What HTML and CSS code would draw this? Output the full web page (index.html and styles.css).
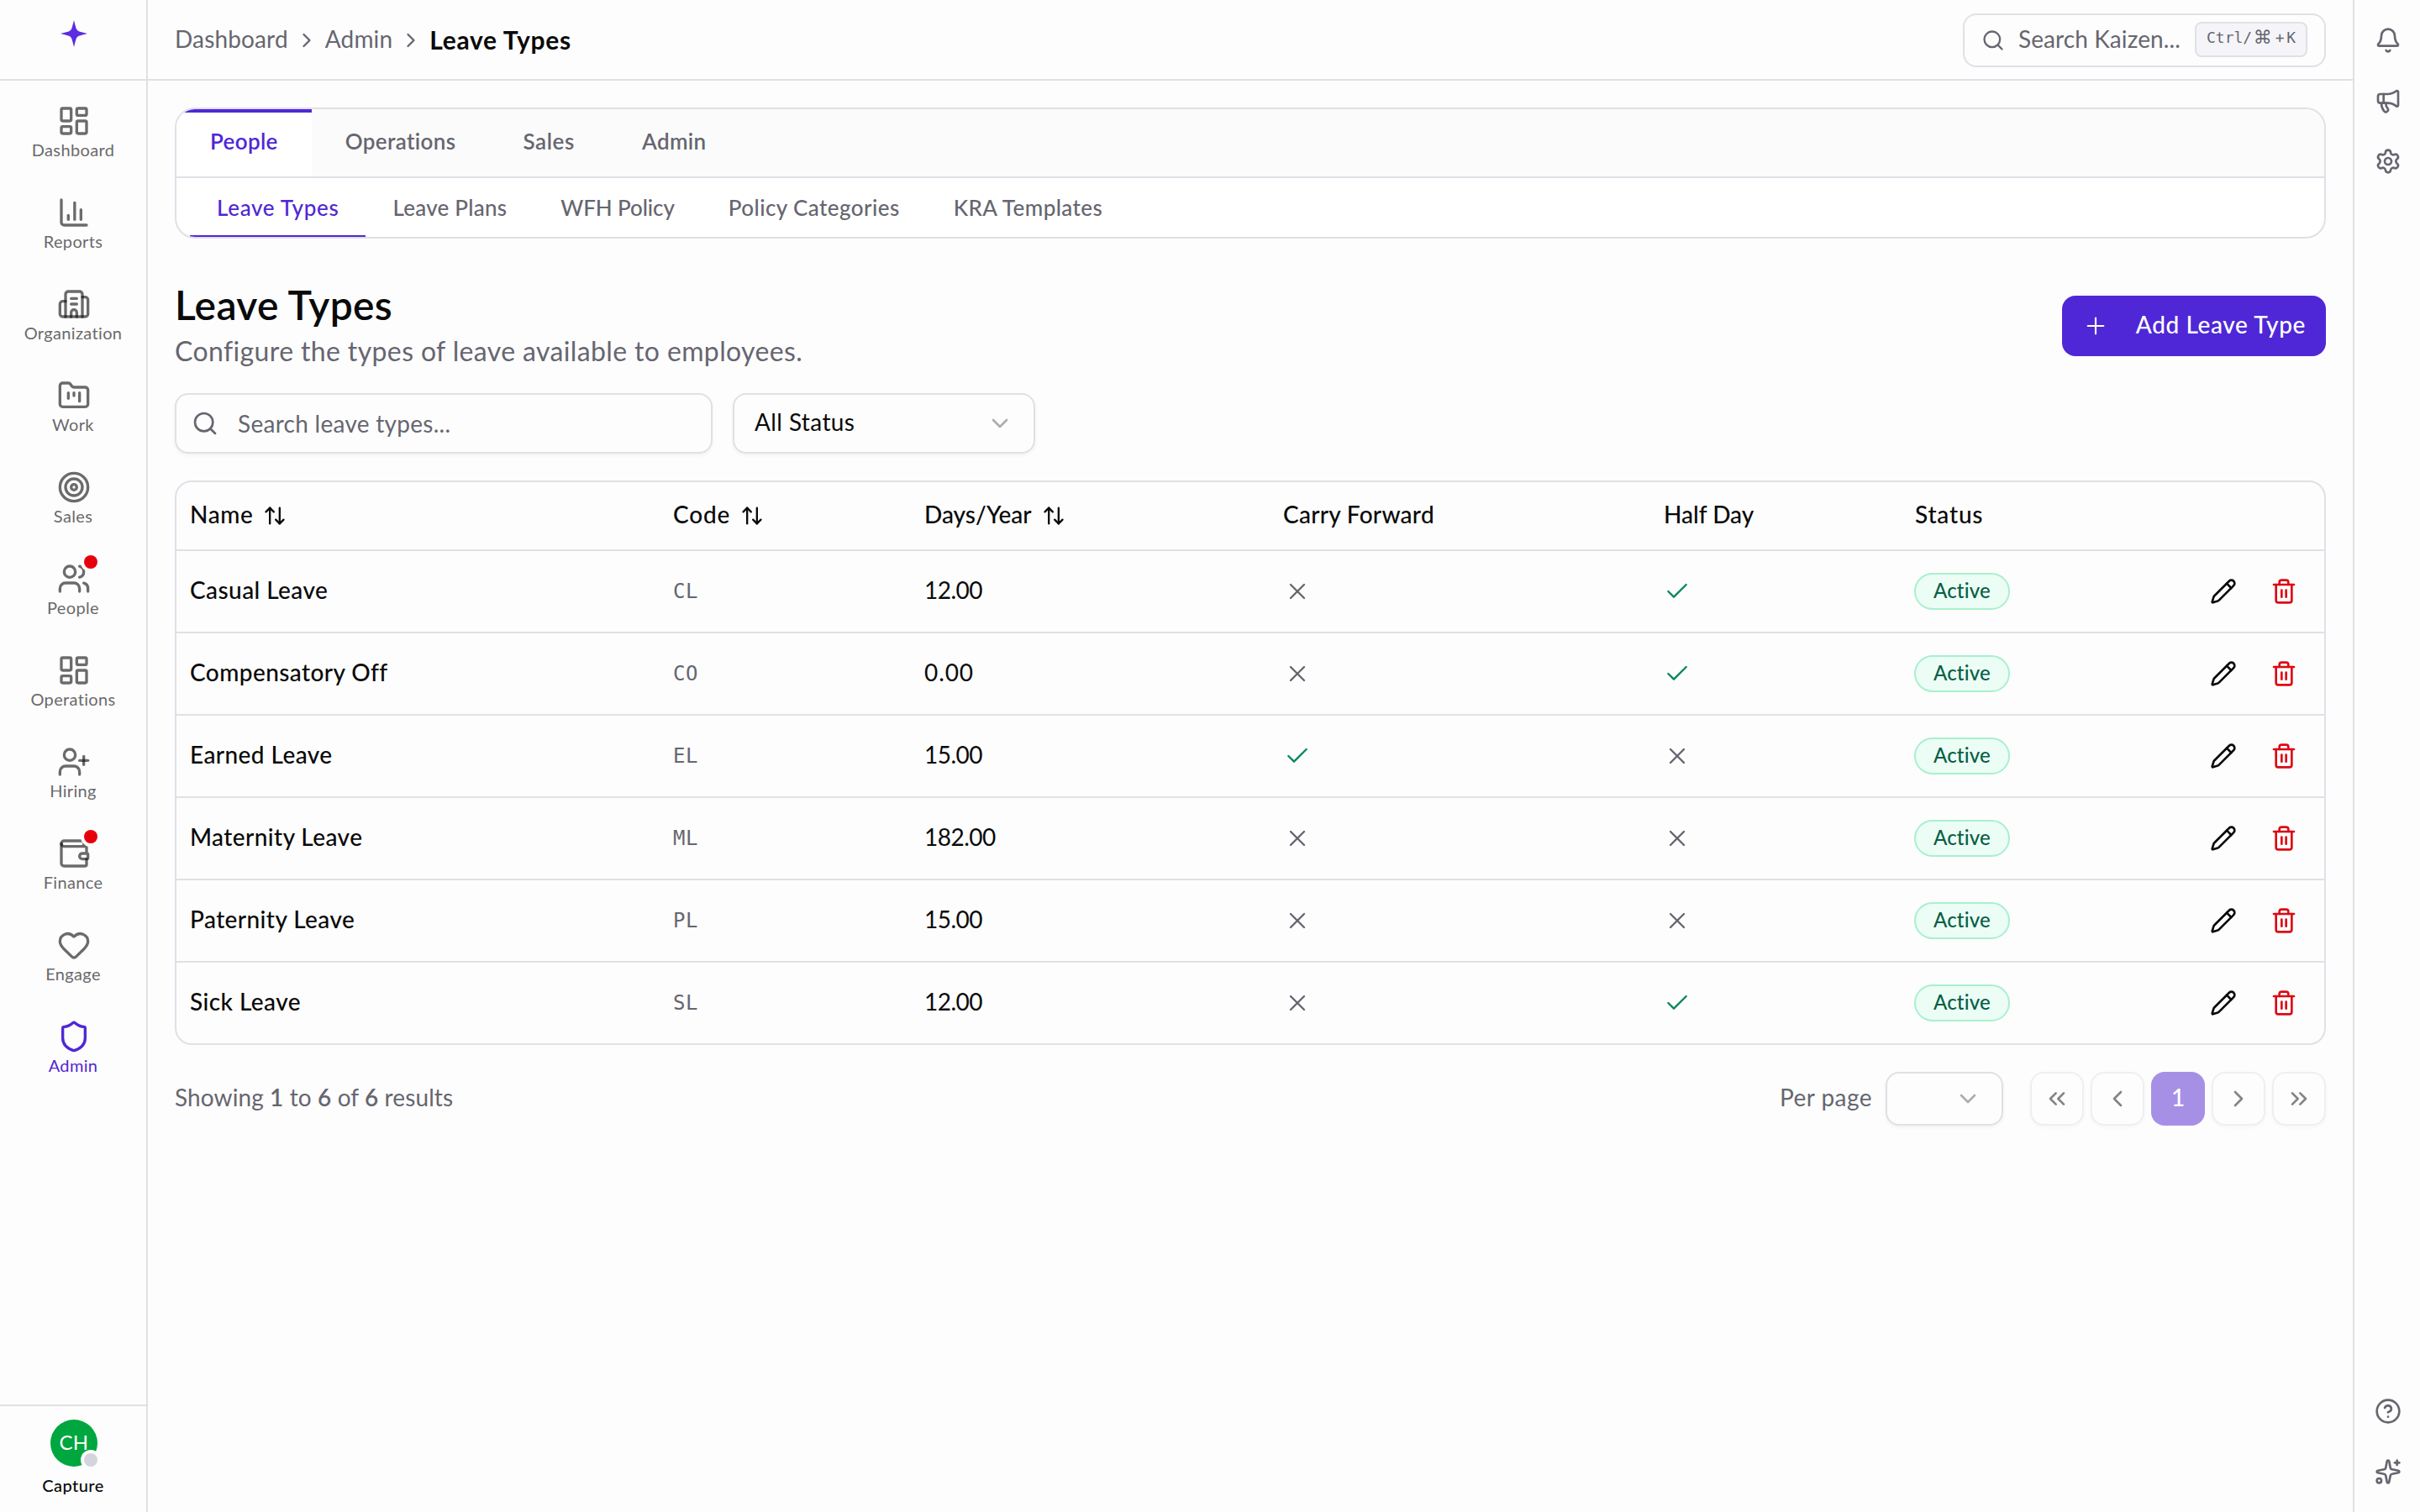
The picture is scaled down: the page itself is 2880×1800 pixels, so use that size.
FILE: index.html
```html
<!DOCTYPE html>
<html lang="en">
<head>
<meta charset="utf-8">
<title>Leave Types</title>
<link rel="stylesheet" href="styles.css">
</head>
<body>
<svg class="sprite" aria-hidden="true">
  <symbol id="grid" viewBox="0 0 24 24"><rect width="7" height="9" x="3" y="3" rx="1"/><rect width="7" height="5" x="14" y="3" rx="1"/><rect width="7" height="9" x="14" y="12" rx="1"/><rect width="7" height="5" x="3" y="16" rx="1"/></symbol>
  <symbol id="chart" viewBox="0 0 24 24"><path d="M3 3v16a2 2 0 0 0 2 2h16"/><path d="M17 17V10"/><path d="M12.500 17V5"/><path d="M8 17v-3"/></symbol>
  <symbol id="building" viewBox="0 0 24 24"><path d="M10 12h4"/><path d="M10 8h4"/><path d="M14 21v-3a2 2 0 0 0-4 0v3"/><path d="M6 10H4a2 2 0 0 0-2 2v7a2 2 0 0 0 2 2h16a2 2 0 0 0 2-2V9a2 2 0 0 0-2-2h-2"/><path d="M6 21V5a2 2 0 0 1 2-2h8a2 2 0 0 1 2 2v16"/></symbol>
  <symbol id="folder" viewBox="0 0 24 24"><path d="M4 20h16a2 2 0 0 0 2-2V8a2 2 0 0 0-2-2h-7.930a2 2 0 0 1-1.660-.900l-.820-1.200A2 2 0 0 0 7.930 3H4a2 2 0 0 0-2 2v13c0 1.100.900 2 2 2Z"/><path d="M8 10v4"/><path d="M12 10v2"/><path d="M16 10v6"/></symbol>
  <symbol id="target" viewBox="0 0 24 24"><circle cx="12" cy="12" r="10"/><circle cx="12" cy="12" r="6"/><circle cx="12" cy="12" r="2"/></symbol>
  <symbol id="users" viewBox="0 0 24 24"><path d="M16 21v-2a4 4 0 0 0-4-4H6a4 4 0 0 0-4 4v2"/><path d="M16 3.128a4 4 0 0 1 0 7.744"/><path d="M22 21v-2a4 4 0 0 0-3-3.870"/><circle cx="9" cy="7" r="4"/></symbol>
  <symbol id="user-plus" viewBox="0 0 24 24"><path d="M16 21v-2a4 4 0 0 0-4-4H6a4 4 0 0 0-4 4v2"/><circle cx="9" cy="7" r="4"/><path d="M19 8v6"/><path d="M22 11h-6"/></symbol>
  <symbol id="wallet" viewBox="0 0 24 24"><path d="M19 7V4a1 1 0 0 0-1-1H5a2 2 0 0 0 0 4h15a1 1 0 0 1 1 1v4h-3a2 2 0 0 0 0 4h3a1 1 0 0 0 1-1v-2a1 1 0 0 0-1-1"/><path d="M3 5v14a2 2 0 0 0 2 2h15a1 1 0 0 0 1-1v-4"/></symbol>
  <symbol id="heart" viewBox="0 0 24 24"><path d="M2 9.500a5.500 5.500 0 0 1 9.591-3.676.560.560 0 0 0 .818 0A5.490 5.490 0 0 1 22 9.500c0 2.290-1.500 4-3 5.500l-5.492 5.313a2 2 0 0 1-3 .019L5 15c-1.500-1.500-3-3.200-3-5.500"/></symbol>
  <symbol id="shield" viewBox="0 0 24 24"><path d="M20 13c0 5-3.500 7.500-7.660 8.950a1 1 0 0 1-.670-.010C7.500 20.500 4 18 4 13V6a1 1 0 0 1 1-1c2 0 4.500-1.200 6.240-2.720a1.170 1.170 0 0 1 1.520 0C14.510 3.810 17 5 19 5a1 1 0 0 1 1 1z"/></symbol>
  <symbol id="star" viewBox="0 0 32 32"><path d="M16 0C17 4 18 8 18.800 10.200Q19.600 12.400 21.800 13.200C24 14 28 15 32 16C28 17 24 18 21.800 18.800Q19.600 19.600 18.800 21.800C18 24 17 28 16 32C15 28 14 24 13.200 21.800Q12.400 19.600 10.200 18.800C8 18 4 17 0 16C4 15 8 14 10.200 13.200Q12.400 12.400 13.200 10.200C14 8 15 4 16 0Z"/></symbol>
  <symbol id="search" viewBox="0 0 24 24"><path d="m21 21-4.340-4.340"/><circle cx="11" cy="11" r="8"/></symbol>
  <symbol id="right" viewBox="0 0 24 24"><path d="m9 18 6-6-6-6"/></symbol>
  <symbol id="left" viewBox="0 0 24 24"><path d="m15 18-6-6 6-6"/></symbol>
  <symbol id="down" viewBox="0 0 24 24"><path d="m6 9 6 6 6-6"/></symbol>
  <symbol id="first" viewBox="0 0 24 24"><path d="m11 17-5-5 5-5"/><path d="m18 17-5-5 5-5"/></symbol>
  <symbol id="last" viewBox="0 0 24 24"><path d="m6 17 5-5-5-5"/><path d="m13 17 5-5-5-5"/></symbol>
  <symbol id="sort" viewBox="0 0 24 24"><path d="m21 16-4 4-4-4"/><path d="M17 20V4"/><path d="m3 8 4-4 4 4"/><path d="M7 4v16"/></symbol>
  <symbol id="x" viewBox="0 0 24 24"><path d="M18 6 6 18"/><path d="m6 6 12 12"/></symbol>
  <symbol id="check" viewBox="0 0 24 24"><path d="M20 6 9 17l-5-5"/></symbol>
  <symbol id="plus" viewBox="0 0 24 24"><path d="M5 12h14"/><path d="M12 5v14"/></symbol>
  <symbol id="pencil" viewBox="0 0 24 24"><path d="M21.174 6.812a1 1 0 0 0-3.986-3.987L3.842 16.174a2 2 0 0 0-.500.830l-1.321 4.352a.500.500 0 0 0 .623.622l4.353-1.320a2 2 0 0 0 .830-.497z"/><path d="m15 5 4 4"/></symbol>
  <symbol id="trash" viewBox="0 0 24 24"><path d="M10 11v6"/><path d="M14 11v6"/><path d="M19 6v14a2 2 0 0 1-2 2H7a2 2 0 0 1-2-2V6"/><path d="M3 6h18"/><path d="M8 6V4a2 2 0 0 1 2-2h4a2 2 0 0 1 2 2v2"/></symbol>
  <symbol id="bell" viewBox="0 0 24 24"><path d="M10.268 21a2 2 0 0 0 3.464 0"/><path d="M3.262 15.326A1 1 0 0 0 4 17h16a1 1 0 0 0 .740-1.673C19.410 13.956 18 12.499 18 8A6 6 0 0 0 6 8c0 4.499-1.411 5.956-2.738 7.326"/></symbol>
  <symbol id="megaphone" viewBox="0 0 24 24"><path d="M11 6a13 13 0 0 0 8.400-2.800A1 1 0 0 1 21 4v12a1 1 0 0 1-1.600.800A13 13 0 0 0 11 14H5a2 2 0 0 1-2-2V8a2 2 0 0 1 2-2z"/><path d="M6 14a12 12 0 0 0 2.400 7.200 2 2 0 0 0 3.200-2.400A8 8 0 0 1 10 14"/><path d="M8 6v8"/></symbol>
  <symbol id="gear" viewBox="0 0 24 24"><path d="M9.671 4.136a2.340 2.340 0 0 1 4.659 0 2.340 2.340 0 0 0 3.319 1.915 2.340 2.340 0 0 1 2.330 4.033 2.340 2.340 0 0 0 0 3.831 2.340 2.340 0 0 1-2.330 4.033 2.340 2.340 0 0 0-3.319 1.915 2.340 2.340 0 0 1-4.659 0 2.340 2.340 0 0 0-3.320-1.915 2.340 2.340 0 0 1-2.330-4.033 2.340 2.340 0 0 0 0-3.831A2.340 2.340 0 0 1 6.350 6.051a2.340 2.340 0 0 0 3.319-1.915"/><circle cx="12" cy="12" r="3"/></symbol>
  <symbol id="help" viewBox="0 0 24 24"><circle cx="12" cy="12" r="10"/><path d="M9.090 9a3 3 0 0 1 5.830 1c0 2-3 3-3 3"/><path d="M12 17h.010"/></symbol>
  <symbol id="sparkles" viewBox="0 0 24 24"><path d="M11.017 2.814a1 1 0 0 1 1.966 0l1.051 5.558a2 2 0 0 0 1.594 1.594l5.558 1.051a1 1 0 0 1 0 1.966l-5.558 1.051a2 2 0 0 0-1.594 1.594l-1.051 5.558a1 1 0 0 1-1.966 0l-1.051-5.558a2 2 0 0 0-1.594-1.594l-5.558-1.051a1 1 0 0 1 0-1.966l5.558-1.051a2 2 0 0 0 1.594-1.594z"/><path d="M20 2v4"/><path d="M22 4h-4"/><circle cx="4" cy="20" r="2"/></symbol>
</svg>
<div class="app">
  <aside class="sidebar">
    <div class="logo"><svg><use href="#star"/></svg></div>
    <nav class="nav">
      <a class="nav-item"><span class="nav-icon"><svg><use href="#grid"/></svg></span><span>Dashboard</span></a>
      <a class="nav-item"><span class="nav-icon"><svg><use href="#chart"/></svg></span><span>Reports</span></a>
      <a class="nav-item"><span class="nav-icon"><svg><use href="#building"/></svg></span><span>Organization</span></a>
      <a class="nav-item"><span class="nav-icon"><svg><use href="#folder"/></svg></span><span>Work</span></a>
      <a class="nav-item"><span class="nav-icon"><svg><use href="#target"/></svg></span><span>Sales</span></a>
      <a class="nav-item"><span class="nav-icon"><svg><use href="#users"/></svg><i class="dot"></i></span><span>People</span></a>
      <a class="nav-item"><span class="nav-icon"><svg><use href="#grid"/></svg></span><span>Operations</span></a>
      <a class="nav-item"><span class="nav-icon"><svg><use href="#user-plus"/></svg></span><span>Hiring</span></a>
      <a class="nav-item"><span class="nav-icon"><svg><use href="#wallet"/></svg><i class="dot"></i></span><span>Finance</span></a>
      <a class="nav-item"><span class="nav-icon"><svg><use href="#heart"/></svg></span><span>Engage</span></a>
      <a class="nav-item active"><span class="nav-icon"><svg><use href="#shield"/></svg></span><span>Admin</span></a>
    </nav>
    <div class="user"><div class="avatar">CH<i class="presence"></i></div><span>Capture</span></div>
  </aside>

  <div class="page">
    <header class="topbar">
      <div class="crumbs"><span>Dashboard</span><svg><use href="#right"/></svg><span>Admin</span><svg><use href="#right"/></svg><b>Leave Types</b></div>
      <div class="command"><svg><use href="#search"/></svg><span class="command-text">Search Kaizen...</span><kbd><span>Ctrl/</span><span class="cmd">⌘</span><span class="plus">+</span><span>K</span></kbd></div>
    </header>
    <main class="main">
      <section class="tabs">
        <div class="tabs-top">
          <a class="tab on">People</a><a class="tab">Operations</a><a class="tab loose">Sales</a><a class="tab">Admin</a>
        </div>
        <div class="tabs-sub">
          <a class="sub on">Leave Types</a><a class="sub snug">Leave Plans</a><a class="sub tight">WFH Policy</a><a class="sub">Policy Categories</a><a class="sub">KRA Templates</a>
        </div>
      </section>

      <div class="head">
        <div><h1>Leave Types</h1><p>Configure the types of leave available to employees.</p></div>
        <button class="add"><svg><use href="#plus"/></svg><span>Add Leave Type</span></button>
      </div>

      <div class="filters">
        <div class="field search"><svg><use href="#search"/></svg><span>Search leave types...</span></div>
        <div class="field select"><span>All Status</span><svg><use href="#down"/></svg></div>
      </div>

      <div class="table">
        <div class="row th"><span class="name">Name<svg><use href="#sort"/></svg></span><span class="wide">Code<svg><use href="#sort"/></svg></span><span>Days/Year<svg><use href="#sort"/></svg></span><span class="carry">Carry Forward</span><span>Half Day</span><span class="wide">Status</span><span></span></div>
        <div class="row"><span class="name">Casual Leave</span><span class="code">CL</span><span class="num">12.00</span><span class="flag"><svg class="no"><use href="#x"/></svg></span><span><svg class="yes"><use href="#check"/></svg></span><span class="st"><em>Active</em></span><span class="act"><svg><use href="#pencil"/></svg><svg class="del"><use href="#trash"/></svg></span></div>
        <div class="row"><span class="name">Compensatory Off</span><span class="code">CO</span><span class="num zero">0.00</span><span class="flag"><svg class="no"><use href="#x"/></svg></span><span><svg class="yes"><use href="#check"/></svg></span><span class="st"><em>Active</em></span><span class="act"><svg><use href="#pencil"/></svg><svg class="del"><use href="#trash"/></svg></span></div>
        <div class="row"><span class="name">Earned Leave</span><span class="code">EL</span><span class="num">15.00</span><span class="flag"><svg class="yes"><use href="#check"/></svg></span><span><svg class="no"><use href="#x"/></svg></span><span class="st"><em>Active</em></span><span class="act"><svg><use href="#pencil"/></svg><svg class="del"><use href="#trash"/></svg></span></div>
        <div class="row"><span class="name">Maternity Leave</span><span class="code">ML</span><span class="num">182.00</span><span class="flag"><svg class="no"><use href="#x"/></svg></span><span><svg class="no"><use href="#x"/></svg></span><span class="st"><em>Active</em></span><span class="act"><svg><use href="#pencil"/></svg><svg class="del"><use href="#trash"/></svg></span></div>
        <div class="row"><span class="name">Paternity Leave</span><span class="code">PL</span><span class="num">15.00</span><span class="flag"><svg class="no"><use href="#x"/></svg></span><span><svg class="no"><use href="#x"/></svg></span><span class="st"><em>Active</em></span><span class="act"><svg><use href="#pencil"/></svg><svg class="del"><use href="#trash"/></svg></span></div>
        <div class="row"><span class="name">Sick Leave</span><span class="code">SL</span><span class="num">12.00</span><span class="flag"><svg class="no"><use href="#x"/></svg></span><span><svg class="yes"><use href="#check"/></svg></span><span class="st"><em>Active</em></span><span class="act"><svg><use href="#pencil"/></svg><svg class="del"><use href="#trash"/></svg></span></div>
      </div>

      <footer class="pager">
        <div class="summary">Showing <b>1</b> to <b>6</b> of <b>6</b> results</div>
        <div class="controls">
          <span class="per">Per page</span>
          <div class="field size"><svg><use href="#down"/></svg></div>
          <div class="pages">
            <button class="pg"><svg><use href="#first"/></svg></button>
            <button class="pg"><svg><use href="#left"/></svg></button>
            <button class="pg cur">1</button>
            <button class="pg"><svg><use href="#right"/></svg></button>
            <button class="pg"><svg><use href="#last"/></svg></button>
          </div>
        </div>
      </footer>
    </main>
  </div>

  <aside class="rail">
    <div class="rail-group"><svg><use href="#bell"/></svg><svg><use href="#megaphone"/></svg><svg><use href="#gear"/></svg></div>
    <div class="rail-group"><svg><use href="#help"/></svg><svg><use href="#sparkles"/></svg></div>
  </aside>
</div>
</body>
</html>
```
FILE: styles.css
```css
:root {
  --bg: #fdfdfd;
  --fg: #0a0a0a;
  --muted: #666670;
  --line: #e0e0e7;
  --brand: #4f27d6;
}
* { box-sizing: border-box; }
body {
  margin: 0;
  background: var(--bg);
  color: var(--fg);
  font-family: Lato, "Noto Sans", sans-serif;
  font-size: 28px;
  line-height: 36px;
  white-space: nowrap;
}
.sprite { display: none; }
svg {
  display: block;
  flex: none;
  width: 32px;
  height: 32px;
  fill: none;
  stroke: currentColor;
  stroke-width: 2;
  stroke-linecap: round;
  stroke-linejoin: round;
}
button { font: inherit; border: 0; padding: 0; margin: 0; }

.app { display: flex; width: 2880px; height: 1800px; overflow: hidden; }

/* Left sidebar */
.sidebar { width: 176px; flex: none; display: flex; flex-direction: column; border-right: 2px solid var(--line); }
.logo { height: 96px; flex: none; padding-top: 24px; border-bottom: 2px solid var(--line); display: flex; justify-content: center; padding-left: 2px; }
.logo svg { fill: #5b2ce0; stroke: none; }
.nav { flex: 1; padding-top: 28px; display: flex; flex-direction: column; gap: 45px; color: #6a6a6b; }
.nav-item { display: flex; flex-direction: column; align-items: center; gap: 4px; height: 64px; font-size: 20px; line-height: 20px; letter-spacing: 0.35px; }
.nav-icon { position: relative; width: 40px; height: 40px; margin-left: 2px; color: rgba(10, 10, 10, 0.6); }
.nav-icon svg { width: 40px; height: 40px; }
.nav-item.active, .nav-item.active .nav-icon { color: var(--brand); }
.dot { position: absolute; top: -8px; right: -8px; width: 16px; height: 16px; border-radius: 50%; background: #e7000b; box-shadow: 0 0 0 4px var(--bg); }
.user { height: 128px; flex: none; border-top: 2px solid var(--line); padding-top: 16px; display: flex; flex-direction: column; align-items: center; gap: 12px; font-size: 20px; line-height: 20px; font-weight: 500; letter-spacing: 0.45px; }
.avatar { position: relative; width: 56px; height: 56px; margin-left: 2px; border-radius: 50%; background: #00a63e; color: #fff; font-size: 24px; line-height: 54px; font-weight: 400; text-align: center; letter-spacing: 0.4px; }
.presence { position: absolute; right: 0; bottom: 0; width: 16px; height: 16px; border-radius: 50%; background: #d4d4de; box-shadow: 0 0 0 4px var(--bg); }

/* Top bar */
.page { flex: 1; display: flex; flex-direction: column; }
.topbar { height: 96px; flex: none; border-bottom: 2px solid var(--line); padding: 0 32px; display: flex; align-items: center; justify-content: space-between; }
.crumbs { display: flex; align-items: center; color: var(--muted); gap: 8px; letter-spacing: 0.15px; }
.crumbs span { padding-bottom: 3px; }
.crumbs svg { width: 28px; height: 28px; margin-top: 2px; }
.crumbs b { color: var(--fg); font-size: 30px; font-weight: 700; letter-spacing: 0.7px; padding-bottom: 1px; }
.command { width: 432px; height: 64px; border: 2px solid var(--line); border-radius: 16px; display: flex; align-items: center; padding: 0 20px 0 20px; color: var(--muted); margin-top: 2px; }
.command svg { width: 28px; height: 28px; }
.command-text { margin-left: 16px; padding-bottom: 5px; letter-spacing: 0.1px; }
kbd { margin-left: auto; width: 134px; height: 42px; margin-bottom: 2px; border: 2px solid var(--line); border-radius: 8px; background: #f5f5f9; display: flex; align-items: center; justify-content: center; font: 18px/30px "DejaVu Sans Mono", monospace; padding-bottom: 4px; }
.cmd { width: 25px; font-family: "DejaVu Sans", sans-serif; font-size: 22px; text-align: center; }
.plus { width: 16px; text-align: center; }

/* Tabs */
.main { flex: 1; padding: 32px; }
.tabs { height: 156px; border: 2px solid var(--line); border-radius: 24px; background: #fff; overflow: hidden; font-size: 26px; color: var(--muted); }
.tabs-top { height: 82px; border-bottom: 2px solid var(--line); background: #fbfbfb; display: flex; font-weight: 600; letter-spacing: 0.35px; }
.tab { padding: 20px 40px 0; }
.tab.loose { letter-spacing: 0.6px; }
.tab.on { background: #fff; color: var(--brand); border-top: 4px solid var(--brand); border-radius: 0 0 4px 0; padding-top: 16px; }
.tabs-sub { height: 70px; padding-left: 16px; display: flex; font-weight: 500; letter-spacing: 0.43px; }
.sub { padding: 17px 32px 0; border-bottom: 2px solid transparent; }
.sub.on { color: var(--brand); border-bottom-color: var(--brand); letter-spacing: 0.67px; }
.sub.snug { letter-spacing: 0.25px; }
.sub.tight { letter-spacing: -0.1px; }

/* Heading */
.head { margin: 54px 0 30px; display: flex; justify-content: space-between; align-items: center; }
h1 { margin: 0; font-size: 48px; line-height: 50px; font-weight: 600; letter-spacing: 0.3px; }
.head p { margin: 10px 0 0; font-size: 32px; line-height: 40px; letter-spacing: 0.37px; color: var(--muted); }
.add { width: 314px; height: 72px; border-radius: 16px; background: var(--brand); color: #fff; font-weight: 500; letter-spacing: 0.6px; display: flex; align-items: center; justify-content: space-between; padding: 0 24px; }
.add svg { stroke-width: 1.6; }
.add span { padding-bottom: 5px; }

.field { border: 2px solid var(--line); border-radius: 16px; display: flex; align-items: center; box-shadow: 0 2px 4px rgba(0, 0, 0, 0.05); background: var(--bg); }
.filters { display: flex; gap: 24px; }
.search { width: 640px; height: 72px; padding-left: 18px; color: var(--muted); }
.search span { margin-left: 23px; padding-bottom: 1px; letter-spacing: 0.28px; }
.select { width: 360px; height: 72px; padding: 0 24px; justify-content: space-between; letter-spacing: 0.4px; }
.select span { padding-bottom: 5px; }
.select svg, .size svg { color: #adadb1; }

/* Table */
.table { margin-top: 32px; border: 2px solid var(--line); border-radius: 20px; overflow: hidden; }
.row { display: grid; grid-template-columns: 575px 299px 427px 453px 299px 1fr 184px; height: 98px; align-items: center; border-bottom: 2px solid var(--line); }
.row:last-child { height: 96px; border-bottom: 0; }
.row > span { padding-left: 16px; display: flex; align-items: center; }
.row.th { height: 82px; font-weight: 500; }
.row.th > span { padding-bottom: 5px; }
.row.th > .name { letter-spacing: 0.6px; }
.row.th > .wide { letter-spacing: 0.8px; }
.row.th > .carry { letter-spacing: 0.28px; }
.row.th svg { width: 28px; height: 28px; margin: 5px 0 0 12px; }
.row > .name, .row > .num { padding-bottom: 4px; }
.row .name { font-weight: 500; letter-spacing: 0.42px; }
.row > .num { letter-spacing: -0.5px; }
.row > .num.zero { letter-spacing: 0.9px; }
.row > .code { font: 24px/32px "DejaVu Sans Mono", monospace; letter-spacing: 0.6px; color: var(--muted); }
.row > .flag { padding-left: 17px; }
.no { color: var(--muted); stroke-width: 1.8; }
.yes { color: #0a885b; stroke-width: 1.8; }
.row > .st { padding-left: 15px; }
.st em { width: 114px; height: 44px; border: 2px solid #a7f0cf; border-radius: 22px; background: #ecfdf5; color: #065f46; font-style: normal; font-size: 24px; line-height: 38px; font-weight: 500; letter-spacing: 0.2px; text-align: center; }
.row > .act { gap: 40px; padding-left: 48px; }
.del { color: #dc0a14; }

/* Pagination */
.pager { margin-top: 32px; height: 64px; display: flex; justify-content: space-between; align-items: center; color: var(--muted); }
.pager b { font-weight: 600; }
.summary { padding-bottom: 5px; letter-spacing: 0.1px; }
.controls { display: flex; align-items: center; }
.per { padding-bottom: 5px; margin-right: 16px; letter-spacing: 0.45px; }
.size { width: 140px; height: 64px; margin-right: 32px; justify-content: flex-end; padding-right: 24px; }
.pages { display: flex; gap: 8px; }
.pg { width: 64px; height: 64px; border: 2px solid #efeff3; border-radius: 16px; background: var(--bg); box-shadow: 0 2px 4px rgba(0, 0, 0, 0.03); color: #848484; display: flex; align-items: center; justify-content: center; }
.pg.cur { border: 0; background: #a690e6; color: #fff; box-shadow: none; font-weight: 500; padding-bottom: 4px; }

/* Right rail */
.rail { width: 80px; flex: none; border-left: 2px solid var(--line); padding: 32px 0; display: flex; flex-direction: column; justify-content: space-between; color: var(--muted); }
.rail-group { display: flex; flex-direction: column; align-items: center; gap: 40px; padding-left: 2px; }
```
